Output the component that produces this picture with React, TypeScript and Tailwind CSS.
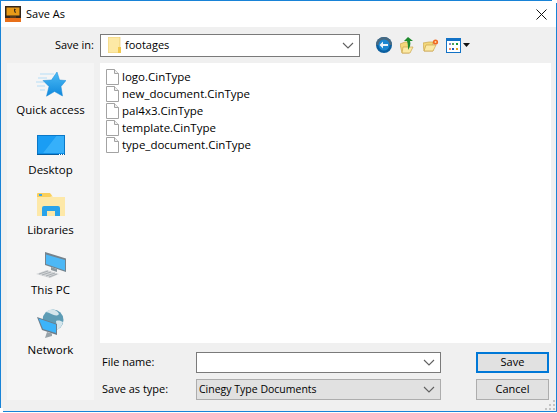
import React from "react";

function FileIcon() {
  return (
    <svg width="13" height="16" viewBox="0 0 13 16" className="shrink-0">
      <path d="M.5.5h8l4 4v11H.5z" fill="#fff" stroke="#a3a3a3" />
      <path d="M8.5.5v4h4" fill="#efefef" stroke="#a3a3a3" />
    </svg>
  );
}

function Chevron() {
  return (
    <svg width="12" height="7" viewBox="0 0 12 7" className="shrink-0">
      <path d="M1 1l5 5 5-5" fill="none" stroke="#606060" strokeWidth="1.1" />
    </svg>
  );
}

function QuickIcon() {
  return (
    <svg width="30" height="25" viewBox="0 0 30 25">
      <defs>
        <linearGradient id="q" x1="0" y1="0" x2="0" y2="1">
          <stop offset="0" stopColor="#4dbcf6" />
          <stop offset="1" stopColor="#0f88dc" />
        </linearGradient>
      </defs>
      <path d="M4 2h14M2 6h9M0 10h8M1 14h8M4 18h5" stroke="#b5ddf6" strokeWidth="1" />
      <path d="M21 0l2.500 8 6.500.5-5 6 1.500 9.500-8-4.500-8 4.700 2.500-9.700-6-6 8.500-.5z" fill="url(#q)" stroke="#1a8ad8" strokeWidth="0.5" />
    </svg>
  );
}

function DesktopIcon() {
  return (
    <svg width="28" height="20" viewBox="0 0 28 20">
      <rect width="28" height="20" fill="#0f8ee6" />
      <path d="M0 0h20L6 18H0z" fill="#1a9df4" />
      <path d="M20 0h8v18H6z" fill="#36b0fa" />
      <rect x=".5" y=".5" width="27" height="19" fill="none" stroke="#0a78c8" />
      <path d="M0 19.500h28" stroke="#075d9e" />
      <path d="M22 19.500h1m1 0h1m1 0h1" stroke="#fff" />
    </svg>
  );
}

function LibrariesIcon() {
  return (
    <svg width="28" height="23" viewBox="0 0 28 23">
      <path d="M0 1h14l2 3h12v19H0z" fill="#fde8a8" />
      <path d="M0 1a1 1 0 011-1h12l2 3-2 1H0z" fill="#f9cf5c" />
      <rect x="2" y="1" width="3" height="2" fill="#3ba4ea" />
      <path d="M5 23V15a2 2 0 012-2h14a2 2 0 012 2v8h-5v-5h-8v5z" fill="#29a3ea" />
    </svg>
  );
}

function PcIcon() {
  return (
    <svg width="32" height="26" viewBox="0 0 32 26">
      <path d="M10 0l21 6.500V20l-21-7z" fill="#75838d" />
      <path d="M11 2.500l19 5.500v10.500L11 12z" fill="#4db8f6" />
      <path d="M16 15l6 2v3l-6-2z" fill="#8c979d" />
      <path d="M1 22l11-4 12 4-9 4z" fill="#d3d6d8" />
      <path d="M4 22l9-3M7 23l9-3M11 24l9-3M14 25l8-3" stroke="#a0a5a9" strokeWidth="0.8" />
    </svg>
  );
}

function NetworkIcon() {
  return (
    <svg width="27" height="29" viewBox="0 0 27 29">
      <circle cx="16" cy="11" r="10.500" fill="#5d9cb5" />
      <path d="M9 3c4-4 11-3 13 2-3 4-8-1-13-2zM19 12c3-1 5 0 7 1-1 4-3 6-6 8z" fill="#d5e6ec" />
      <path d="M0 8l20 7v11L5 21z" fill="#6d7d8a" />
      <path d="M1.500 9.500L19 15.500v8.500L6 20z" fill="#3cb4fa" />
      <path d="M10 23l5 1.500V27l-7 2z" fill="#98a2a8" />
    </svg>
  );
}

function NavItem({ icon, label, pad }: { icon: React.ReactNode; label: string; pad: string }) {
  return (
    <div className="flex h-[60px] flex-col items-center">
      <div className={`flex h-[36px] items-end justify-center ${pad}`}>{icon}</div>
      <div className="mt-[3px] text-[11.5px] leading-[16px] text-black">{label}</div>
    </div>
  );
}

const files = [
  "logo.CinType",
  "new_document.CinType",
  "pal4x3.CinType",
  "template.CinType",
  "type_document.CinType",
];

export default function App() {
  return (
    <div
      className="relative flex h-[412px] w-[557px] flex-col overflow-hidden bg-white"
      style={{ fontFamily: '"Open Sans", "Noto Sans", sans-serif' }}
    >
      <div className="h-px shrink-0 bg-[#1883d7]" />
      <div className="flex min-h-0 flex-1 border-x border-b border-[#1883d7]">
        <div className="flex min-w-0 flex-1 flex-col">
          {/* Title bar */}
          <div className="flex h-[26px] shrink-0 items-center bg-white pl-[4px] pr-[5px]">
            <svg width="16" height="16" viewBox="0 0 16 16" className="shrink-0">
              <rect width="16" height="16" fill="#e8701a" />
              <rect x="0" y="0" width="16" height="12" fill="#33261a" />
              <rect x="1.500" y="1.500" width="13" height="8" fill="#e89a18" />
              <path d="M9 2.500l2 1-1 1 1 2-1 .5-1-2z" fill="#33261a" />
              <rect x="5" y="10.500" width="6" height="1" fill="#7a4a1a" />
            </svg>
            <span className="ml-[5px] pt-[1px] text-[11px] text-black">Save As</span>
            <svg width="11" height="11" viewBox="0 0 11 11" className="ml-auto mr-[4px] mt-[1px]">
              <path d="M.5.5l10 10M10.500.5l-10 10" stroke="#111" strokeWidth="1" />
            </svg>
          </div>

          {/* Body */}
          <div className="flex min-h-0 flex-1 flex-col bg-[#f0f0f0] pl-[6px] pr-[5px]">
            {/* Toolbar */}
            <div className="flex h-[36px] shrink-0 items-center">
              <div className="w-[87px] text-right text-[11px] text-black">Save in:</div>
              <div className="ml-[6px] flex h-[23px] w-[260px] items-center border border-[#7a7a7a] bg-white pl-[7px] pr-[5px]">
                <svg width="13" height="16" viewBox="0 0 13 16" className="shrink-0">
                  <path d="M0 1a1 1 0 011-1h11v16H1a1 1 0 01-1-1z" fill="#fde9a5" stroke="#e8c25a" strokeWidth="0.6" />
                  <rect x="10" y="10" width="3" height="6" fill="#f3c94d" />
                </svg>
                <span className="ml-[4px] text-[11px] text-black">footages</span>
                <span className="ml-auto"><Chevron /></span>
              </div>
              <div className="ml-[16px] flex items-center">
                <svg width="16" height="16" viewBox="0 0 16 16">
                  <circle cx="8" cy="8" r="8" fill="#0b5f9f" />
                  <path d="M0 8a8 8 0 0116 0z" fill="#49697f" />
                  <circle cx="8" cy="8" r="5.500" fill="#1a86d0" />
                  <path d="M3.500 8l3.500-3.500V7h5v2H7v2.500z" fill="#e8f3fb" />
                </svg>
                <svg width="14" height="17" viewBox="0 0 14 17" className="ml-[8px]">
                  <path d="M0 7l5-2h4v11H2z" fill="#f3d77a" stroke="#caa54a" strokeWidth="0.7" />
                  <path d="M2 16l1-6h10l-3 6z" fill="#fbe9a5" stroke="#caa54a" strokeWidth="0.7" />
                  <path d="M8 0l5 4h-3c1 3 0 6-2 9 0-3 0-6-1-9H4z" fill="#1d8a2c" />
                </svg>
                <svg width="16" height="13" viewBox="0 0 16 13" className="ml-[9px]">
                  <path d="M0 4l6-1h4v9H1z" fill="#f3d77a" stroke="#caa54a" strokeWidth="0.7" />
                  <path d="M1 12l2-6h10l-3 6z" fill="#fbe9a5" stroke="#caa54a" strokeWidth="0.7" />
                  <circle cx="12.500" cy="3" r="2.600" fill="#f06820" />
                  <circle cx="12.500" cy="3" r="1" fill="#fcd9a0" />
                </svg>
                <svg width="15" height="15" viewBox="0 0 15 15" className="ml-[7px]">
                  <rect x=".5" y=".5" width="14" height="14" fill="#fff" stroke="#1272c6" />
                  <rect x="1" y="1" width="13" height="2" fill="#1272c6" />
                  <rect x="3" y="5" width="2" height="2" fill="#8a8ac8" />
                  <rect x="6" y="5" width="2" height="2" fill="#56a060" />
                  <rect x="10" y="5" width="2" height="2" fill="#1a9a3a" />
                  <rect x="3" y="10" width="2" height="2" fill="#f08a60" />
                  <rect x="6" y="10" width="2" height="2" fill="#1f58b8" />
                  <rect x="10" y="10" width="2" height="2" fill="#e0a020" />
                </svg>
                <svg width="7" height="4" viewBox="0 0 7 4" className="ml-[2px]">
                  <path d="M0 0h7L3.500 4z" fill="#111" />
                </svg>
              </div>
            </div>

            {/* Main */}
            <div className="flex min-h-0 flex-1 pb-[11px]">
              <div className="flex w-[87px] shrink-0 flex-col bg-[#f5f5f5]">
                <NavItem icon={<QuickIcon />} label="Quick access" pad="pb-[2px]" />
                <NavItem icon={<DesktopIcon />} label="Desktop" pad="pb-[4px]" />
                <NavItem icon={<LibrariesIcon />} label="Libraries" pad="pb-[3px]" />
                <NavItem icon={<PcIcon />} label="This PC" pad="pb-[1px]" />
                <NavItem icon={<NetworkIcon />} label="Network" pad="pb-[1px]" />
              </div>
              <div className="ml-[6px] flex min-w-0 flex-1 flex-col">
                <div className="h-[283px] bg-white pl-[6px] pt-[5px]">
                  {files.map((f) => (
                    <div key={f} className="flex h-[17px] items-center">
                      <FileIcon />
                      <span className="ml-[3px] text-[11.5px] text-black">{f}</span>
                    </div>
                  ))}
                </div>
                <div className="mt-[9px] flex">
                  <div className="flex w-[343px] flex-col gap-[6px]">
                    <div className="flex items-center">
                      <span className="w-[96px] pl-[2px] text-[11px] text-black">File name:</span>
                      <div className="flex h-[21px] w-[245px] items-center justify-end border border-[#7a7a7a] bg-white pr-[5px]">
                        <Chevron />
                      </div>
                    </div>
                    <div className="flex items-center">
                      <span className="w-[96px] pl-[2px] text-[11px] text-black">Save as type:</span>
                      <div className="flex h-[21px] w-[245px] items-center justify-between border border-[#adadad] bg-[#e1e1e1] pl-[2px] pr-[5px]">
                        <span className="text-[10.5px] text-black">Cinegy Type Documents</span>
                        <Chevron />
                      </div>
                    </div>
                  </div>
                  <div className="ml-[33px] flex flex-col gap-[6px]">
                    <div className="flex h-[21px] w-[73px] items-center justify-center border-2 border-[#0078d7] bg-[#e1e1e1] text-[11px] text-black">Save</div>
                    <div className="flex h-[21px] w-[73px] items-center justify-center border border-[#adadad] bg-[#e1e1e1] text-[11px] text-black">Cancel</div>
                  </div>
                </div>
              </div>
            </div>
          </div>
        </div>
      </div>
      {/* Window corner notches and the resize grip */}
      <div className="absolute right-0 top-0 h-[3px] w-[5px] bg-white" />
      <div className="absolute bottom-0 left-0 h-[4px] w-[3px] bg-white" />
      <svg width="11" height="11" viewBox="0 0 11 11" className="absolute bottom-[2px] right-[2px]">
        <path d="M9 1h2v2H9zM5 5h2v2H5zM9 5h2v2H9zM1 9h2v2H1zM5 9h2v2H5zM9 9h2v2H9z" fill="#c4c4c4" />
      </svg>
    </div>
  );
}
